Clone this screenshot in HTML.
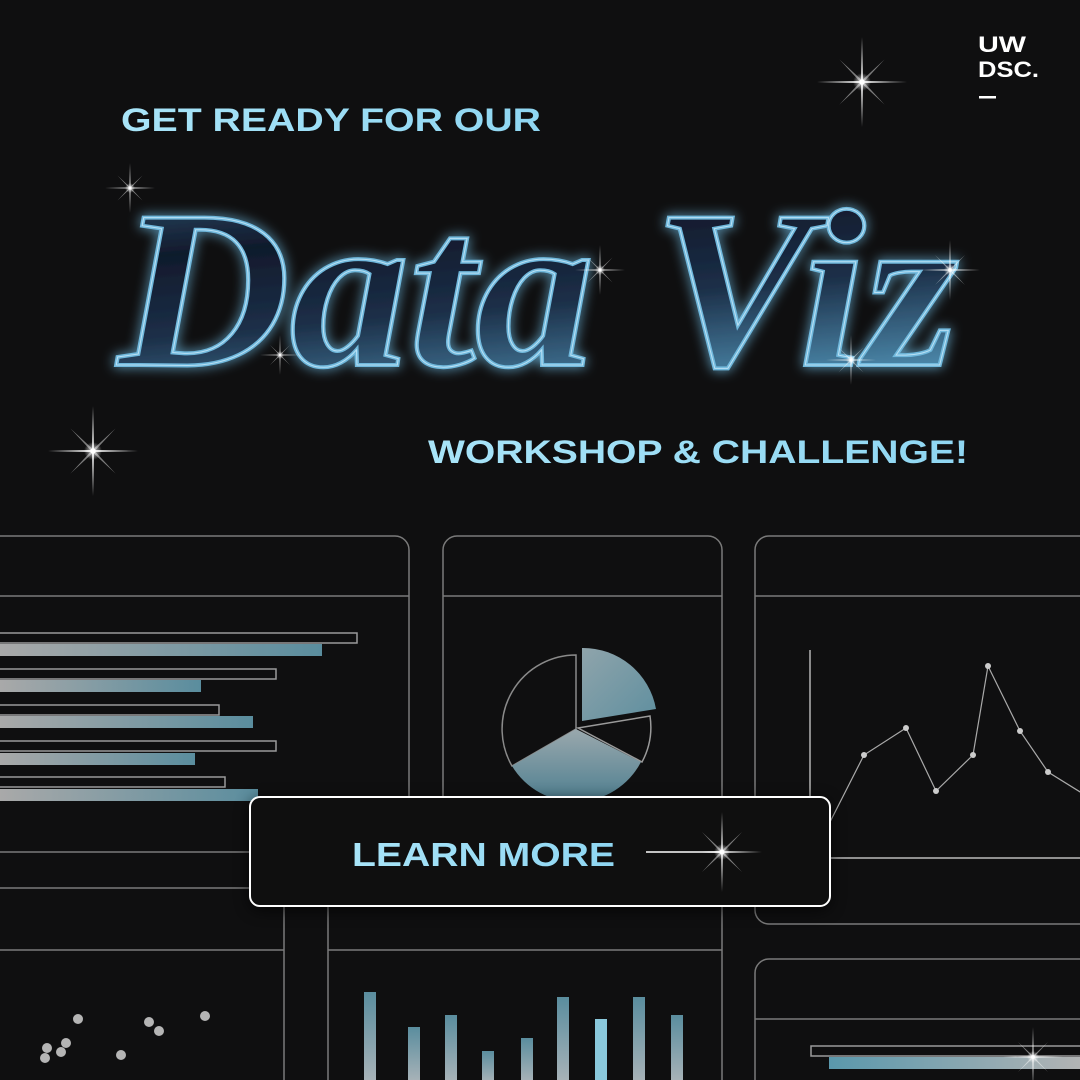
<!DOCTYPE html>
<html><head><meta charset="utf-8"><style>
html,body{margin:0;padding:0;background:#0f0f10;}
body{width:1080px;height:1080px;overflow:hidden;position:relative;}
svg{position:absolute;left:0;top:0}
</style></head><body>
<svg width="1080" height="1080" viewBox="0 0 1080 1080" xmlns="http://www.w3.org/2000/svg">
<defs>
<linearGradient id="hb" x1="0" x2="1"><stop offset="0" stop-color="#a9a9a9"/><stop offset="1" stop-color="#5a8d9e"/></linearGradient>
<linearGradient id="hb2" x1="0" x2="1"><stop offset="0" stop-color="#5a98ac"/><stop offset="1" stop-color="#b5b5b5"/></linearGradient>
<linearGradient id="vb" x1="0" y1="0" x2="0" y2="1"><stop offset="0" stop-color="#5a8d9e"/><stop offset="1" stop-color="#a9b3b8"/></linearGradient>
<linearGradient id="pie" x1="0" y1="0" x2="1" y2="1"><stop offset="0" stop-color="#8fa4ab"/><stop offset="1" stop-color="#5f8f9f"/></linearGradient>
<linearGradient id="pie2" x1="0" y1="0" x2="0" y2="1"><stop offset="0" stop-color="#9aa8ad"/><stop offset="1" stop-color="#4e7f90"/></linearGradient>
<linearGradient id="txt" x1="0" x2="1"><stop offset="0" stop-color="#a8e4f8"/><stop offset="1" stop-color="#8fd6f2"/></linearGradient>
<linearGradient id="title" x1="0" y1="0" x2="0.3" y2="1"><stop offset="0" stop-color="#3a5f80"/><stop offset="0.35" stop-color="#101a2c"/><stop offset="0.65" stop-color="#1c2f48"/><stop offset="1" stop-color="#4a86a8"/></linearGradient>
<radialGradient id="spk"><stop offset="0" stop-color="#fff"/><stop offset="0.3" stop-color="#fff" stop-opacity="0.6"/><stop offset="1" stop-color="#fff" stop-opacity="0"/></radialGradient>
<filter id="glow" x="-20%" y="-30%" width="140%" height="160%"><feGaussianBlur stdDeviation="6" result="b"/><feMerge><feMergeNode in="b"/><feMergeNode in="SourceGraphic"/></feMerge></filter>
<filter id="sh" x="-10%" y="-20%" width="120%" height="140%"><feGaussianBlur stdDeviation="8"/></filter>
<symbol id="sp" viewBox="-50 -50 100 100">
<circle r="10" fill="url(#spk)"/>
<path d="M0-50L1.2 0 0 50-1.2 0Z M-50 0L0-1.2 50 0 0 1.2Z" fill="#fff" opacity="0.85"/>
<path d="M-25-25L1 -1 25 25-1 1Z M25-25L1 1-25 25-1-1Z" fill="#fff" opacity="0.45"/>
<circle r="3" fill="#fff"/>
</symbol>
</defs>

<g fill="none" stroke="#7a7a7a" stroke-width="1.5">
<path d="M-5 536H395a14 14 0 0 1 14 14V800"/>
<line x1="0" y1="596" x2="409" y2="596"/>
<line x1="0" y1="852" x2="255" y2="852"/>
<line x1="0" y1="888" x2="255" y2="888"/>
<line x1="0" y1="950" x2="284" y2="950"/>
<line x1="284" y1="905" x2="284" y2="1080"/>
<line x1="328" y1="905" x2="328" y2="1080"/>
<line x1="328" y1="950" x2="722" y2="950"/>
<path d="M443 800V550a14 14 0 0 1 14-14H708a14 14 0 0 1 14 14V1080"/>
<line x1="443" y1="596" x2="722" y2="596"/>
<path d="M1085 536H769a14 14 0 0 0-14 14V910a14 14 0 0 0 14 14H1085"/>
<line x1="755" y1="596" x2="1080" y2="596"/>
<path d="M1085 959H769a14 14 0 0 0-14 14V1080"/>
<line x1="755" y1="1019" x2="1080" y2="1019"/>
</g>

<g stroke="#9a9a9a" stroke-width="1.5" fill="none">
<rect x="-5" y="633" width="362" height="10"/>
<rect x="-5" y="669" width="281" height="10"/>
<rect x="-5" y="705" width="224" height="10"/>
<rect x="-5" y="741" width="281" height="10"/>
<rect x="-5" y="777" width="230" height="10"/>
<rect x="811" y="1046" width="275" height="10"/>
</g>
<rect x="0" y="644" width="322" height="12" fill="url(#hb)"/>
<rect x="0" y="680" width="201" height="12" fill="url(#hb)"/>
<rect x="0" y="716" width="253" height="12" fill="url(#hb)"/>
<rect x="0" y="753" width="195" height="12" fill="url(#hb)"/>
<rect x="0" y="789" width="258" height="12" fill="url(#hb)"/>
<rect x="829" y="1057" width="260" height="12" fill="url(#hb2)"/>

<path d="M576 729L576 655A74 74 0 0 0 512 766Z" fill="none" stroke="#8a8a8a" stroke-width="1.5"/>
<path d="M582 648A74 74 0 0 1 656 709L582 721Z" fill="url(#pie)"/>
<path d="M578 728L650 716A74 74 0 0 1 642 762Z" fill="none" stroke="#9a9a9a" stroke-width="1.5"/>
<path d="M576 729L641 762A74 74 0 0 1 512 766Z" fill="url(#pie2)"/>

<line x1="810" y1="650" x2="810" y2="858" stroke="#ddd" stroke-width="1.2"/>
<line x1="810" y1="858" x2="1080" y2="858" stroke="#ddd" stroke-width="1.2"/>
<polyline points="830,822 864,755 906,728 936,791 973,755 988,666 1020,731 1048,772 1085,795" fill="none" stroke="#aaa" stroke-width="1.2"/>
<g fill="#ccc"><circle cx="864" cy="755" r="3"/><circle cx="906" cy="728" r="3"/><circle cx="936" cy="791" r="3"/><circle cx="973" cy="755" r="3"/><circle cx="988" cy="666" r="3"/><circle cx="1020" cy="731" r="3"/><circle cx="1048" cy="772" r="3"/></g>

<g fill="url(#vb)">
<rect x="364" y="992" width="12" height="90"/><rect x="408" y="1027" width="12" height="55"/>
<rect x="445" y="1015" width="12" height="67"/><rect x="482" y="1051" width="12" height="31"/>
<rect x="521" y="1038" width="12" height="44"/><rect x="557" y="997" width="12" height="85"/>
<rect x="595" y="1019" width="12" height="63" fill="#8ac8dc"/><rect x="633" y="997" width="12" height="85"/>
<rect x="671" y="1015" width="12" height="67"/>
</g>
<g fill="#b5b5b5"><circle cx="78" cy="1019" r="5"/><circle cx="47" cy="1048" r="5"/><circle cx="66" cy="1043" r="5"/><circle cx="45" cy="1058" r="5"/><circle cx="61" cy="1052" r="5"/><circle cx="149" cy="1022" r="5"/><circle cx="159" cy="1031" r="5"/><circle cx="121" cy="1055" r="5"/><circle cx="205" cy="1016" r="5"/></g>

<rect x="250" y="800" width="580" height="110" rx="10" fill="#000" opacity="0.7" filter="url(#sh)"/>
<rect x="250" y="797" width="580" height="109" rx="10" fill="#0f0f0f" stroke="#fff" stroke-width="2"/>
<text x="352" y="866" font-family="Liberation Sans, sans-serif" font-weight="bold" font-size="33" fill="url(#txt)" textLength="263" lengthAdjust="spacingAndGlyphs">LEARN MORE</text>
<line x1="646" y1="852" x2="722" y2="852" stroke="#fff" stroke-width="1.5"/>

<text x="121" y="131" font-family="Liberation Sans, sans-serif" font-weight="bold" font-size="32" fill="url(#txt)" textLength="420" lengthAdjust="spacingAndGlyphs">GET READY FOR OUR</text>
<text x="428" y="463" font-family="Liberation Sans, sans-serif" font-weight="bold" font-size="32" fill="url(#txt)" textLength="540" lengthAdjust="spacingAndGlyphs">WORKSHOP &amp; CHALLENGE!</text>

<g filter="url(#glow)">
<text x="118" y="365" font-family="Liberation Serif, serif" font-weight="bold" font-style="italic" font-size="225" fill="url(#title)" stroke="#6fb8dc" stroke-width="4" textLength="840" lengthAdjust="spacingAndGlyphs">Data Viz</text>
</g>
<text x="118" y="365" font-family="Liberation Serif, serif" font-weight="bold" font-style="italic" font-size="225" fill="none" stroke="#d8f2ff" stroke-width="1" opacity="0.7" textLength="840" lengthAdjust="spacingAndGlyphs">Data Viz</text>

<text x="978" y="52" font-family="Liberation Sans, sans-serif" font-weight="bold" font-size="22" fill="#fff" textLength="48" lengthAdjust="spacingAndGlyphs">UW</text>
<text x="978" y="77" font-family="Liberation Sans, sans-serif" font-weight="bold" font-size="22" fill="#fff" textLength="61" lengthAdjust="spacingAndGlyphs">DSC.</text>
<rect x="979" y="96" width="17" height="2.5" fill="#fff"/>

<use href="#sp" x="817" y="37" width="90" height="90"/>
<use href="#sp" x="48" y="406" width="90" height="90"/>
<use href="#sp" x="682" y="812" width="80" height="80"/>
<use href="#sp" x="1003" y="1027" width="60" height="60"/>
<use href="#sp" x="105" y="163" width="50" height="50"/>
<use href="#sp" x="575" y="245" width="50" height="50"/>
<use href="#sp" x="920" y="240" width="60" height="60"/>
<use href="#sp" x="826" y="335" width="50" height="50"/>
<use href="#sp" x="260" y="335" width="40" height="40"/>
</svg>
</body></html>
